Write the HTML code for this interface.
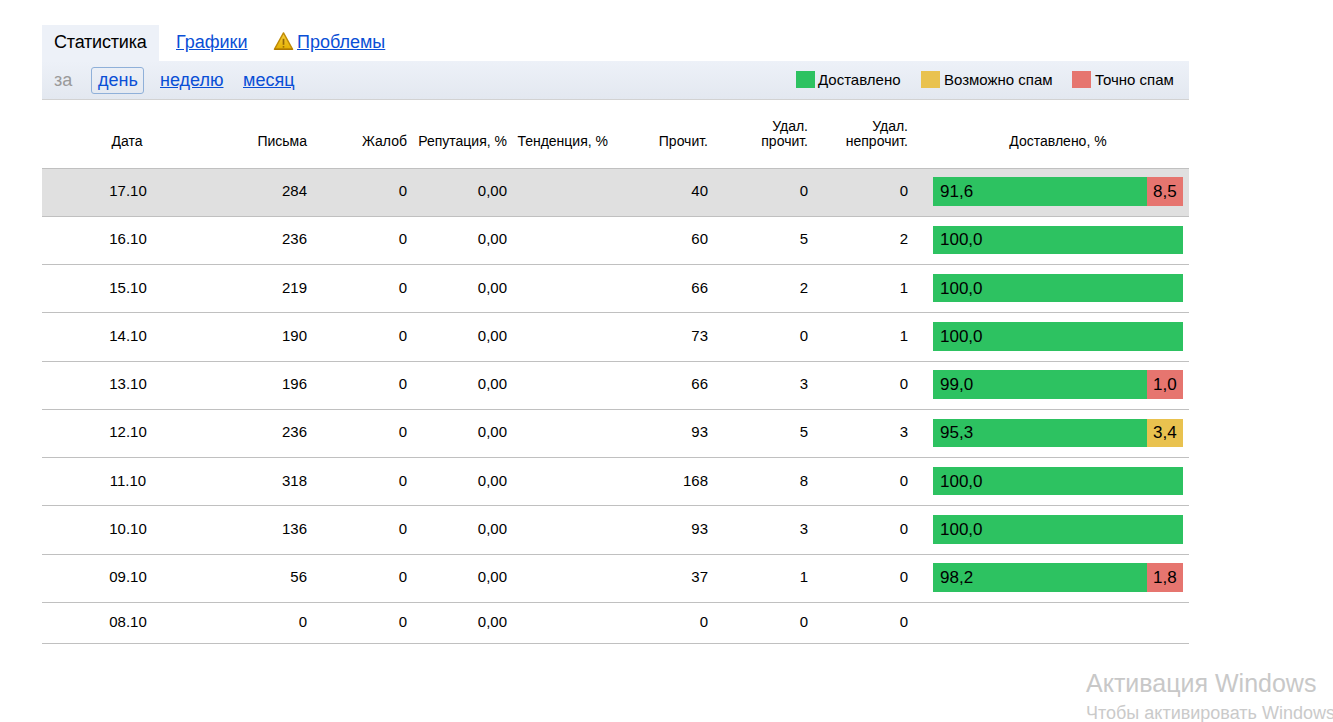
<!DOCTYPE html>
<html><head><meta charset="utf-8"><style>
*{margin:0;padding:0;box-sizing:border-box}
html,body{width:1333px;height:722px;overflow:hidden;background:#fff}
body{font-family:"Liberation Sans",sans-serif;color:#000;position:relative}
.a{position:absolute;white-space:nowrap;line-height:normal}
.r{text-align:right}
.c{text-align:center}
.lk{color:#0a4fd6;text-decoration:underline;text-underline-offset:1px}
.ln{position:absolute;left:42px;width:1147px;height:1px;background:#c0c0c0}
.bar{position:absolute;left:933px;width:250px;background:#2dc261}
.sp{position:absolute;left:1147px;width:36px}
</style></head><body>

<div class="a" style="left:42px;top:25px;width:117px;height:36px;background:#edf1f8"></div>
<div class="a" style="left:54px;top:32px;font-size:18px;letter-spacing:-0.2px">Статистика</div>
<div class="a lk" style="left:176px;top:32px;font-size:18px">Графики</div>
<svg class="a" style="left:272px;top:30px" width="23" height="22" viewBox="0 0 23 22">
<defs><linearGradient id="wg" x1="0" y1="0" x2="0" y2="1"><stop offset="0" stop-color="#f8d040"/><stop offset="1" stop-color="#e3b000"/></linearGradient></defs>
<path d="M11.5 2.9 L20.6 19.3 L2.4 19.3 Z" fill="url(#wg)" stroke="#bf8a06" stroke-width="1.4" stroke-linejoin="round"/>
<path d="M2.6 19.2 L20.4 19.2" stroke="#a87400" stroke-width="1.2"/>
<path d="M11.5 8.8 L11.5 14.8" stroke="#94680a" stroke-width="1.7"/>
<rect x="10.7" y="16.1" width="1.6" height="1.5" fill="#94680a"/>
</svg>
<div class="a lk" style="left:297px;top:32px;font-size:18px">Проблемы</div>
<div class="a" style="left:42px;top:61px;width:1147px;height:39px;background:linear-gradient(#edf1f8,#e3e8f0);border-bottom:1px solid #d2d2d2"></div>
<div class="a" style="left:54px;top:70px;font-size:18px;color:#9a9a9a">за</div>
<div class="a" style="left:91px;top:67px;width:53px;height:27px;border:1px solid #8fb0d9;border-radius:3px"></div>
<div class="a" style="left:98px;top:70px;font-size:18px;color:#0a4fd6">день</div>
<div class="a lk" style="left:160px;top:70px;font-size:18px">неделю</div>
<div class="a lk" style="left:243px;top:70px;font-size:18px">месяц</div>
<div class="a" style="left:796px;top:71px;width:19px;height:17px;background:#2dc261"></div>
<div class="a" style="left:818px;top:71px;font-size:15px">Доставлено</div>
<div class="a" style="left:921px;top:71px;width:19px;height:17px;background:#e9c24f"></div>
<div class="a" style="left:944px;top:71px;font-size:15px">Возможно спам</div>
<div class="a" style="left:1072px;top:71px;width:19px;height:17px;background:#e6756f"></div>
<div class="a" style="left:1095px;top:71px;font-size:15px">Точно спам</div>
<div class="a c" style="left:27px;width:200px;top:133px;font-size:14px">Дата</div>
<div class="a r" style="right:1026px;top:133px;font-size:14px">Письма</div>
<div class="a r" style="right:926px;top:133px;font-size:14px">Жалоб</div>
<div class="a r" style="right:826px;top:133px;font-size:14px">Репутация, %</div>
<div class="a r" style="right:725px;top:133px;font-size:14px">Тенденция, %</div>
<div class="a r" style="right:625px;top:133px;font-size:14px">Прочит.</div>
<div class="a r" style="right:525px;top:118px;font-size:14px">Удал.</div>
<div class="a r" style="right:525px;top:133px;font-size:14px">прочит.</div>
<div class="a r" style="right:425px;top:118px;font-size:14px">Удал.</div>
<div class="a r" style="right:425px;top:133px;font-size:14px">непрочит.</div>
<div class="a c" style="left:958px;width:200px;top:133px;font-size:14px">Доставлено, %</div>
<div class="a" style="left:42px;top:169px;width:1147px;height:47px;background:#e0e0e0"></div>
<div class="ln" style="top:168px"></div>
<div class="ln" style="top:216px"></div>
<div class="ln" style="top:264px"></div>
<div class="ln" style="top:312px"></div>
<div class="ln" style="top:361px"></div>
<div class="ln" style="top:409px"></div>
<div class="ln" style="top:457px"></div>
<div class="ln" style="top:505px"></div>
<div class="ln" style="top:554px"></div>
<div class="ln" style="top:602px"></div>
<div class="ln" style="top:643px"></div>
<div class="a c" style="left:28px;width:200px;top:182px;font-size:15px">17.10</div>
<div class="a r" style="right:1026px;top:182px;font-size:15px">284</div>
<div class="a r" style="right:926px;top:182px;font-size:15px">0</div>
<div class="a r" style="right:826px;top:182px;font-size:15px">0,00</div>
<div class="a r" style="right:625px;top:182px;font-size:15px">40</div>
<div class="a r" style="right:525px;top:182px;font-size:15px">0</div>
<div class="a r" style="right:425px;top:182px;font-size:15px">0</div>
<div class="bar" style="top:177px;height:29px"></div>
<div class="a" style="left:940px;top:182px;font-size:17px">91,6</div>
<div class="sp" style="top:177px;height:29px;background:#e6756f"></div>
<div class="a" style="left:1153px;top:182px;font-size:17px">8,5</div>
<div class="a c" style="left:28px;width:200px;top:230px;font-size:15px">16.10</div>
<div class="a r" style="right:1026px;top:230px;font-size:15px">236</div>
<div class="a r" style="right:926px;top:230px;font-size:15px">0</div>
<div class="a r" style="right:826px;top:230px;font-size:15px">0,00</div>
<div class="a r" style="right:625px;top:230px;font-size:15px">60</div>
<div class="a r" style="right:525px;top:230px;font-size:15px">5</div>
<div class="a r" style="right:425px;top:230px;font-size:15px">2</div>
<div class="bar" style="top:226px;height:28px"></div>
<div class="a" style="left:940px;top:230px;font-size:17px">100,0</div>
<div class="a c" style="left:28px;width:200px;top:279px;font-size:15px">15.10</div>
<div class="a r" style="right:1026px;top:279px;font-size:15px">219</div>
<div class="a r" style="right:926px;top:279px;font-size:15px">0</div>
<div class="a r" style="right:826px;top:279px;font-size:15px">0,00</div>
<div class="a r" style="right:625px;top:279px;font-size:15px">66</div>
<div class="a r" style="right:525px;top:279px;font-size:15px">2</div>
<div class="a r" style="right:425px;top:279px;font-size:15px">1</div>
<div class="bar" style="top:274px;height:28px"></div>
<div class="a" style="left:940px;top:279px;font-size:17px">100,0</div>
<div class="a c" style="left:28px;width:200px;top:327px;font-size:15px">14.10</div>
<div class="a r" style="right:1026px;top:327px;font-size:15px">190</div>
<div class="a r" style="right:926px;top:327px;font-size:15px">0</div>
<div class="a r" style="right:826px;top:327px;font-size:15px">0,00</div>
<div class="a r" style="right:625px;top:327px;font-size:15px">73</div>
<div class="a r" style="right:525px;top:327px;font-size:15px">0</div>
<div class="a r" style="right:425px;top:327px;font-size:15px">1</div>
<div class="bar" style="top:322px;height:29px"></div>
<div class="a" style="left:940px;top:327px;font-size:17px">100,0</div>
<div class="a c" style="left:28px;width:200px;top:375px;font-size:15px">13.10</div>
<div class="a r" style="right:1026px;top:375px;font-size:15px">196</div>
<div class="a r" style="right:926px;top:375px;font-size:15px">0</div>
<div class="a r" style="right:826px;top:375px;font-size:15px">0,00</div>
<div class="a r" style="right:625px;top:375px;font-size:15px">66</div>
<div class="a r" style="right:525px;top:375px;font-size:15px">3</div>
<div class="a r" style="right:425px;top:375px;font-size:15px">0</div>
<div class="bar" style="top:370px;height:29px"></div>
<div class="a" style="left:940px;top:375px;font-size:17px">99,0</div>
<div class="sp" style="top:370px;height:29px;background:#e6756f"></div>
<div class="a" style="left:1153px;top:375px;font-size:17px">1,0</div>
<div class="a c" style="left:28px;width:200px;top:423px;font-size:15px">12.10</div>
<div class="a r" style="right:1026px;top:423px;font-size:15px">236</div>
<div class="a r" style="right:926px;top:423px;font-size:15px">0</div>
<div class="a r" style="right:826px;top:423px;font-size:15px">0,00</div>
<div class="a r" style="right:625px;top:423px;font-size:15px">93</div>
<div class="a r" style="right:525px;top:423px;font-size:15px">5</div>
<div class="a r" style="right:425px;top:423px;font-size:15px">3</div>
<div class="bar" style="top:419px;height:28px"></div>
<div class="a" style="left:940px;top:423px;font-size:17px">95,3</div>
<div class="sp" style="top:419px;height:28px;background:#e9c24f"></div>
<div class="a" style="left:1153px;top:423px;font-size:17px">3,4</div>
<div class="a c" style="left:28px;width:200px;top:472px;font-size:15px">11.10</div>
<div class="a r" style="right:1026px;top:472px;font-size:15px">318</div>
<div class="a r" style="right:926px;top:472px;font-size:15px">0</div>
<div class="a r" style="right:826px;top:472px;font-size:15px">0,00</div>
<div class="a r" style="right:625px;top:472px;font-size:15px">168</div>
<div class="a r" style="right:525px;top:472px;font-size:15px">8</div>
<div class="a r" style="right:425px;top:472px;font-size:15px">0</div>
<div class="bar" style="top:467px;height:28px"></div>
<div class="a" style="left:940px;top:472px;font-size:17px">100,0</div>
<div class="a c" style="left:28px;width:200px;top:520px;font-size:15px">10.10</div>
<div class="a r" style="right:1026px;top:520px;font-size:15px">136</div>
<div class="a r" style="right:926px;top:520px;font-size:15px">0</div>
<div class="a r" style="right:826px;top:520px;font-size:15px">0,00</div>
<div class="a r" style="right:625px;top:520px;font-size:15px">93</div>
<div class="a r" style="right:525px;top:520px;font-size:15px">3</div>
<div class="a r" style="right:425px;top:520px;font-size:15px">0</div>
<div class="bar" style="top:515px;height:29px"></div>
<div class="a" style="left:940px;top:520px;font-size:17px">100,0</div>
<div class="a c" style="left:28px;width:200px;top:568px;font-size:15px">09.10</div>
<div class="a r" style="right:1026px;top:568px;font-size:15px">56</div>
<div class="a r" style="right:926px;top:568px;font-size:15px">0</div>
<div class="a r" style="right:826px;top:568px;font-size:15px">0,00</div>
<div class="a r" style="right:625px;top:568px;font-size:15px">37</div>
<div class="a r" style="right:525px;top:568px;font-size:15px">1</div>
<div class="a r" style="right:425px;top:568px;font-size:15px">0</div>
<div class="bar" style="top:563px;height:29px"></div>
<div class="a" style="left:940px;top:568px;font-size:17px">98,2</div>
<div class="sp" style="top:563px;height:29px;background:#e6756f"></div>
<div class="a" style="left:1153px;top:568px;font-size:17px">1,8</div>
<div class="a c" style="left:28px;width:200px;top:613px;font-size:15px">08.10</div>
<div class="a r" style="right:1026px;top:613px;font-size:15px">0</div>
<div class="a r" style="right:926px;top:613px;font-size:15px">0</div>
<div class="a r" style="right:826px;top:613px;font-size:15px">0,00</div>
<div class="a r" style="right:625px;top:613px;font-size:15px">0</div>
<div class="a r" style="right:525px;top:613px;font-size:15px">0</div>
<div class="a r" style="right:425px;top:613px;font-size:15px">0</div>
<div class="a" style="left:1086px;top:669px;font-size:25px;color:#c8c8c8">Активация Windows</div>
<div class="a" style="left:1086px;top:703px;font-size:18px;color:#cacaca">Чтобы активировать Windows</div>
</body></html>
